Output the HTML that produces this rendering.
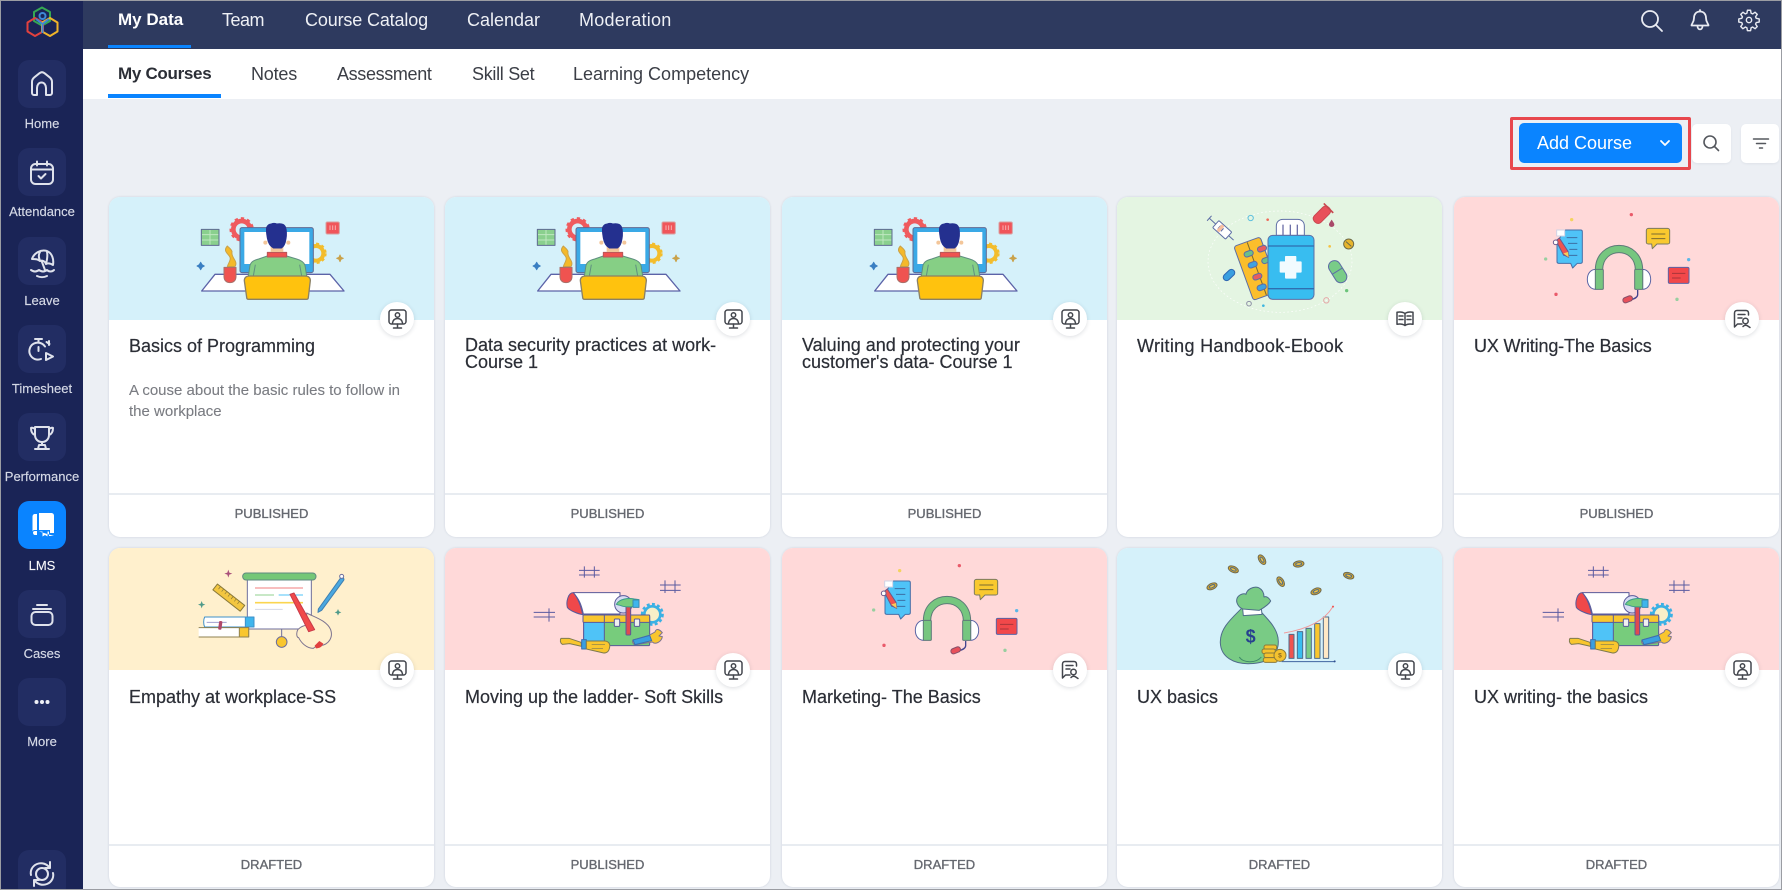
<!DOCTYPE html>
<html lang="en">
<head>
<meta charset="utf-8">
<title>My Courses</title>
<style>
html,body{margin:0;padding:0;background:#eceff4}
body{width:1782px;height:890px;overflow:hidden;position:relative;font-family:"Liberation Sans",sans-serif}
#page{position:absolute;left:0;top:0;width:1782px;height:890px;overflow:hidden;background:#eceff4;filter:blur(.35px)}
.a{position:absolute;white-space:nowrap}
#frame{position:absolute;left:0;top:0;width:1780px;height:888px;border:1px solid #9b9da3;z-index:9;pointer-events:none}
#side{position:absolute;left:1px;top:1px;width:82px;height:888px;background:#1a2456}
#top{position:absolute;left:83px;top:1px;width:1699px;height:48px;background:#2e3a5f}
#sub{position:absolute;left:83px;top:49px;width:1699px;height:50px;background:#fff}
.t{color:#eef0f5;font-size:18px;line-height:20px;top:10px}
.s{color:#3b3e46;font-size:18px;line-height:20px;top:64px}
.box{position:absolute;left:18px;width:48px;height:48px;border-radius:11px;background:#222d63}
.lab{position:absolute;left:1px;width:82px;text-align:center;color:#d5d9e6;font-size:13px;line-height:16px;-webkit-text-stroke:.15px #d5d9e6}
.ic{position:absolute;left:0;top:0;fill:none;stroke:#dfe2ec;stroke-width:2;stroke-linecap:round;stroke-linejoin:round}
.card{position:absolute;width:325px;background:#fff;border-radius:11px;box-shadow:0 0 2px rgba(90,110,140,.22);overflow:hidden}
.r1{top:197px;height:340px}
.r2{top:548px;height:339px}
.img{position:absolute;left:0;top:0;width:325px;height:123px;overflow:hidden}
.r2 .img{height:122px}
.img svg{position:absolute}
.blue{background:#d5f1fa}.green{background:#e4f5e2}.pink{background:#ffd9d9}.yel{background:#fff0cd}
.ti{position:absolute;left:20px;top:140px;font-size:18px;line-height:18px;color:#2b2e36;white-space:nowrap;-webkit-text-stroke:.2px #2b2e36}
.de{position:absolute;left:20px;top:183px;font-size:15px;line-height:21px;color:#7a7c82;white-space:nowrap;-webkit-text-stroke:.1px #7a7c82}
.ln{position:absolute;left:0;top:296px;width:325px;height:2px;background:#e8ecf1}
.st{position:absolute;left:0;top:309px;width:325px;text-align:center;font-size:13px;line-height:16px;color:#666970;-webkit-text-stroke:.35px #666970}
.bd{position:absolute;left:271px;top:105px;width:34px;height:34px;border-radius:50%;background:#fff;box-shadow:0 1px 4px rgba(60,70,90,.18)}
.bd svg{position:absolute;left:0;top:0;fill:none;stroke:#43464d;stroke-width:1.5;stroke-linecap:round;stroke-linejoin:round}
</style>
</head>
<body>
<svg width="0" height="0" style="position:absolute">
<defs>
<g id="prog" stroke="#5f6a92" stroke-width="3" stroke-linejoin="round">
  <rect x="274" y="118" width="53" height="48" fill="#8ad08e"/>
  <path d="M276 134H325M276 150H325M300 120V164" stroke="#bfe8c0" fill="none"/>
  <circle cx="395" cy="118" r="25" fill="none" stroke="#ef5b5e" stroke-width="14"/>
  <circle cx="395" cy="118" r="33" fill="none" stroke="#ef5b5e" stroke-width="7" stroke-dasharray="10 9"/>
  <circle cx="618" cy="190" r="22" fill="none" stroke="#f3bd2c" stroke-width="12"/>
  <circle cx="618" cy="190" r="29" fill="none" stroke="#f3bd2c" stroke-width="6" stroke-dasharray="9 8"/>
  <rect x="390" y="113" width="220" height="135" rx="6" fill="#3aa9e6"/>
  <rect x="403" y="126" width="195" height="96" fill="#fff" stroke="none"/>
  <rect x="648" y="96" width="40" height="36" rx="4" fill="#f0555a" stroke="#d9a0a0"/>
  <path d="M660 106v14M668 106v14M676 106v14" stroke="#f8b0b0"/>
  <path d="M690 195l3 7 7 3-7 3-3 7-3-7-7-3 7-3z" fill="#c9a24a" stroke="#c9a24a"/>
  <path d="M272 217l4 7 7 4-7 4-4 7-4-7-7-4 7-4z" fill="#3a7fc2" stroke="#3a7fc2"/>
  <path d="M315 253H660L702 303H275Z" fill="#fff" stroke="#5c63a8" stroke-width="4"/>
  <path d="M352 168c-18 20 14 26 8 42-2 8-6 12-8 20 14 0 24 0 24-2 8-16-14-26-10-42 1-6-8-12-14-18z" fill="#f4b92a" stroke="#c9a24a"/>
  <path d="M342 232h36v28c0 12-8 18-18 18s-18-6-18-18z" fill="#ef5350" stroke="#a8706a"/>
  <path d="M415 258L420 226C424 213 435 210 446 207L472 198H530L560 207C574 211 582 216 585 226L590 258Z" fill="#86cf85" stroke="#5f8f80"/>
  <path d="M430 258l6-34M575 258l-6-34" stroke="#5f8f80" fill="none"/>
  <path d="M472 187h58v14h-58z" fill="#ef5350" stroke="#b9575a"/>
  <path d="M482 186v-16h38v16z" fill="#f3c69a" stroke="none"/>
  <circle cx="466" cy="158" r="6" fill="#f3c69a" stroke="none"/>
  <circle cx="535" cy="158" r="6" fill="#f3c69a" stroke="none"/>
  <path d="M470 112c4-8 8-10 14-10 4-2 10-3 16 0 12-2 22 0 26 8 4 10 4 26 2 36-2 14-6 24-14 28h-24c-10-6-16-18-18-30-2-12-4-22-2-32z" fill="#24308f" stroke="#24308f"/>
  <path d="M403 272c0-10 6-14 16-14h166c10 0 16 4 16 14l-6 50c0 4-2 6-6 6H416c-4 0-6-2-6-6z" fill="#ffc20e" stroke="#8b8166" stroke-width="4"/>
</g>
<g id="pills" stroke="#5d6da5" stroke-width="3" stroke-linejoin="round">
  <ellipse cx="510" cy="215" rx="216" ry="152" fill="none" stroke="#fff" stroke-width="2" stroke-dasharray="5 7"/>
  <g transform="rotate(-20 440 235)">
    <rect x="398" y="150" width="84" height="172" rx="8" fill="#fbbe2c"/>
    <path d="M440 152v168" stroke="#7a6a30"/>
  </g>
  <rect x="402" y="183" width="28" height="16" rx="8" fill="#6bc08a" transform="rotate(-20 416 191)"/>
  <rect x="442" y="168" width="28" height="16" rx="8" fill="#e85c60" transform="rotate(-20 456 176)"/>
  <rect x="414" y="216" width="28" height="16" rx="8" fill="#3fa2e0" transform="rotate(-20 428 224)"/>
  <rect x="455" y="203" width="26" height="16" rx="8" fill="#6bc08a" transform="rotate(-20 468 211)"/>
  <rect x="428" y="252" width="28" height="16" rx="8" fill="#e85c60" transform="rotate(-20 442 260)"/>
  <rect x="441" y="284" width="28" height="16" rx="8" fill="#3fa2e0" transform="rotate(-20 455 292)"/>
  <path d="M499 136v-28c0-12 8-20 20-20h44c12 0 20 8 20 20v28z" fill="#fff"/>
  <path d="M519 104v32M541 104v32M562 104v32" stroke="#6d70a8" stroke-width="4"/>
  <rect x="474" y="136" width="138" height="192" rx="14" fill="#38bdf0"/>
  <path d="M474 168H612M474 296H612" stroke="#2f6eb0" stroke-width="4"/>
  <path d="M528 198h28c2 0 3 1 3 3v13h13c2 0 3 1 3 3v28c0 2-1 3-3 3h-13v15c0 2-1 3-3 3h-28c-2 0-3-1-3-3v-15h-13c-2 0-3-1-3-3v-28c0-2 1-3 3-3h13v-13c0-2 1-3 3-3z" fill="#f1fbff" stroke="none"/>
  <g transform="rotate(42 330 115)"><rect x="312" y="100" width="52" height="28" rx="3" fill="#fff"/><path d="M364 114h20M286 114h26M286 104v20M326 108v12M338 108v12" fill="none"/><rect x="326" y="102" width="10" height="24" fill="#f9c0a0" stroke="none"/></g>
  <g transform="rotate(45 635 75)"><rect x="621" y="44" width="28" height="60" rx="12" fill="#e8505a" stroke="#c84850"/><path d="M615 46h40" stroke="#c84850" stroke-width="5"/></g>
  <path d="M665 89c-5 8-8 11-8 15 0 4 4 7 8 7s8-3 8-7c0-4-3-7-8-15z" fill="#a84a6a" stroke="none"/>
  <circle cx="716" cy="162" r="15" fill="#e7b52d" stroke="#6c6a4a"/><path d="M708 155l16 14" stroke="#6c6a4a"/>
  <g transform="rotate(-32 683 245)"><rect x="665" y="209" width="36" height="72" rx="18" fill="#79cc88"/><path d="M665 243h36" /></g>
  <g transform="rotate(47 357 255)"><rect x="347" y="235" width="20" height="40" rx="10" fill="#3a9fe0" stroke="#2f66b0"/></g>
  <circle cx="422" cy="84" r="8" fill="none" stroke="#5fc0de"/>
  <circle cx="649" cy="331" r="8" fill="none" stroke="#e5a8a8"/>
  <circle cx="417" cy="341" r="7" fill="none" stroke="#8d8fa6"/>
  <circle cx="473" cy="89" r="4" fill="#ef6a5a" stroke="none"/>
  <circle cx="659" cy="169" r="4" fill="#f5c242" stroke="none"/>
  <circle cx="710" cy="302" r="5" fill="#6cc47b" stroke="none"/>
  <circle cx="460" cy="347" r="4" fill="#3db6e0" stroke="none"/>
</g>
<g id="head" stroke="#5a64a5" stroke-width="3" stroke-linejoin="round">
  <path d="M346 120h46c3 0 5 2 5 5v90c0 3-2 5-5 5h-10l-14 14-6-14h-36c-3 0-5-2-5-5v-60z" fill="#4fc3f7" stroke="#456fa8"/>
  <path d="M320 120h24v18h-24z" fill="#fff" stroke="#cfd3e6"/>
  <path d="M350 143h32M354 160h28M358 178h24M340 196h42" stroke="#3c6fa4" fill="none"/>
  <path d="M318 152l10-8 26 40 2 18-16-8z" fill="#ef5350" stroke="#6c5a8c"/>
  <path d="M340 190l16 12-2-16z" fill="#f7cd5a" stroke="none"/>
  <circle cx="317" cy="157" r="7" fill="#fff" stroke="#6c5a8c"/>
  <path d="M595 115h58c3 0 6 3 6 6v36c0 3-3 5-6 5h-32l-14 14-2-14h-10c-3 0-6-2-6-5v-36c0-3 3-6 6-6z" fill="#f9c92f" stroke="#7a7a60"/>
  <path d="M604 132h42M604 146h42" stroke="#7a6a30" fill="none"/>
  <rect x="655" y="232" width="62" height="48" rx="4" fill="#f2484a" stroke="#5a64a5"/>
  <path d="M666 250h40M666 264h26" stroke="#a8353a" fill="none"/>
  <path d="M412 268c0-17 10-30 25-30v60c-15 0-25-13-25-30z" fill="#fff"/>
  <path d="M602 268c0-17-10-30-24-30v60c14 0 24-13 24-30z" fill="#fff"/>
  <path d="M447 240c0-84 120-84 120 0" fill="none" stroke="#5d7a78" stroke-width="25"/>
  <path d="M447 240c0-84 120-84 120 0" fill="none" stroke="#76c67f" stroke-width="19"/>
  <rect x="436" y="238" width="24" height="60" rx="3" fill="#76c67f" stroke="#5d7a78"/>
  <rect x="554" y="238" width="24" height="60" rx="3" fill="#76c67f" stroke="#5d7a78"/>
  <path d="M563 300v14c0 8-8 12-22 16" fill="none" stroke="#44458f" stroke-width="4"/>
  <rect x="518" y="320" width="30" height="16" rx="8" fill="#e8505a" stroke="#88506a" transform="rotate(-22 533 328)"/>
  <circle cx="365" cy="89" r="5" fill="#f4d35e" stroke="none"/>
  <circle cx="544" cy="74" r="5" fill="#ea5a6a" stroke="none"/>
  <circle cx="287" cy="207" r="5" fill="#98cfa0" stroke="none"/>
  <circle cx="716" cy="209" r="5" fill="#5cb8e8" stroke="none"/>
  <circle cx="318" cy="313" r="5" fill="#ea5a6a" stroke="none"/>
  <circle cx="681" cy="328" r="5" fill="#98cfa0" stroke="none"/>
</g>
<g id="pres" stroke="#6d6e9c" stroke-width="3" stroke-linejoin="round">
  <path d="M355 74l3 9 9 3-9 3-3 9-3-9-9-3 9-3z" fill="#a9507a" stroke="none"/>
  <path d="M275 168l3 8 8 3-8 3-3 8-3-8-8-3 8-3z" fill="#4f9a8a" stroke="none"/>
  <path d="M684 192l3 7 7 3-7 3-3 7-3-7-7-3 7-3z" fill="#4f9a8a" stroke="none"/>
  <g transform="rotate(38 355 158)"><rect x="304" y="146" width="104" height="22" fill="#f3c640" stroke="#8a7a3a"/><path d="M316 146v10M328 146v10M340 146v10M352 146v10M364 146v10M376 146v10M388 146v10" stroke="#8a7a3a" stroke-width="2"/></g>
  <path d="M515 250v26" stroke="#6d6e9c"/>
  <circle cx="515" cy="291" r="16" fill="#f9c62e"/>
  <rect x="412" y="100" width="192" height="152" fill="#fff"/>
  <rect x="398" y="84" width="220" height="21" rx="10" fill="#75c777" stroke="#5f8a80"/>
  <path d="M435 129H579" stroke="#f27e7e" fill="none"/>
  <path d="M435 150H492" stroke="#92d18f" fill="none"/><path d="M506 150H579" stroke="#4fc3f7" fill="none"/>
  <path d="M435 173H579" stroke="#fbd54f" stroke-width="5" fill="none"/>
  <path d="M435 193H518" stroke="#d5d8e4" fill="none"/>
  <path d="M284 216h146v30H284c-4-8-4-22 0-30z" fill="#fff" stroke="#3f90c9"/>
  <path d="M406 216h26v30h-26z" fill="#3fb5ec" stroke="#3f90c9"/>
  <path d="M290 232h60" stroke="#a0a0d0" fill="none"/>
  <path d="M266 248h150v28H266" fill="#fff" stroke="#8f8150"/>
  <path d="M388 248h28v28h-28z" fill="#f9c62e" stroke="#8f8150"/>
  <rect x="326" y="228" width="10" height="26" rx="3" fill="#b0486a" stroke="none" transform="rotate(8 330 240)"/>
  <path d="M625 192l66-92c4-6 14 0 10 6l-66 90-11 6z" fill="#4aa8e0" stroke="#3f7fb0"/>
  <circle cx="695" cy="94" r="6" fill="#fff"/>
  <path d="M590 204c22 12 60 22 72 50 8 24-6 44-30 48l-4-6-18 14c-20 0-36-16-44-32-8 0-8-22 2-28 6-6 14-8 22-10z" fill="#fff0cd" stroke="#7d7490"/>
  <path d="M540 148l12-4 62 110-18 6z" fill="#f04a4a" stroke="#c83a4a"/>
  <path d="M618 310c10 0 18-4 22-14l-12-8-14 14z" fill="#e0403f" stroke="none"/>
</g>
<g id="tool" stroke="#5a5a9a" stroke-width="3" stroke-linejoin="round">
  <path d="M402 76h62M402 90h62M418 64v34M448 64v34M645 120h62M645 136h62M660 106v38M690 106v38M266 202h64M266 216h64M312 190v40" fill="none" stroke="#5a5aa0"/>
  <path d="M385 143h140v64H415c-6-30-14-46-30-64z" fill="#fff"/>
  <path d="M385 143c-16 0-22 28-18 44 6 10 34 20 46 22-6-30-14-50-28-66z" fill="#f0484a"/>
  <circle cx="535" cy="178" r="26" fill="#d8dcf3"/>
  <circle cx="622" cy="208" r="24" fill="#f7efc8" stroke="#3ab0e4" stroke-width="8"/>
  <circle cx="622" cy="208" r="31" fill="none" stroke="#3ab0e4" stroke-width="7" stroke-dasharray="9 7"/>
  <rect x="416" y="212" width="198" height="90" rx="4" fill="#77cc7c"/>
  <rect x="416" y="212" width="62" height="90" fill="#4fc3f7"/>
  <rect x="414" y="210" width="200" height="22" rx="2" fill="#f9c62e"/>
  <path d="M478 210v22" />
  <rect x="508" y="222" width="16" height="22" rx="3" fill="#f0f0f0"/>
  <rect x="568" y="222" width="16" height="22" rx="3" fill="#f0f0f0"/>
  <rect x="543" y="180" width="14" height="90" rx="3" fill="#e04a4f"/>
  <path d="M514 178c8-16 36-20 54-16l14 2v20l-14-2c-4 6-30 4-40 0-6-2-10-2-14-4z" fill="#77cc7c" stroke="#3a9a8a"/>
  <rect x="564" y="165" width="18" height="22" fill="#3fb5ec" stroke="#3a8ab0"/>
  <path d="M564 285l48-14 18-10c4-14 16-6 22 2l-10 10 10 2c-2 14-20 26-30 16l-48 8c-8 2-14-8-10-14z" fill="#f9c62e" stroke="#7d7490"/>
  <path d="M564 285l50-14 6 16-50 12z" fill="#3a9fe0" stroke="#3a6fb0"/>
  <path d="M348 280h24l36 12 2 12-36-8-22 2c-6-4-8-12-4-18z" fill="#f9c62e" stroke="#7d7a50"/>
  <rect x="410" y="284" width="14" height="28" fill="#3a9fe0" stroke="#3a6fb0"/>
  <path d="M424 288h54c12 0 18 8 16 18-2 14-8 18-18 18l-52-12z" fill="#f9c62e" stroke="#7d7a50"/>
  <path d="M440 298h40M440 310h34" stroke="#7d7a50" stroke-width="2"/>
</g>
<g id="coin"><ellipse rx="16" ry="9" fill="#d9a82a" stroke="#6e6a52" stroke-width="3"/><ellipse rx="9" ry="4" fill="#f4c542"/></g>
<g id="money" stroke="#4f6c8a" stroke-width="3" stroke-linejoin="round">
  <use href="#coin" x="306" y="124" transform="rotate(-24 306 124)"/>
  <use href="#coin" x="370" y="73" transform="rotate(24 370 73)"/>
  <use href="#coin" x="456" y="44" transform="rotate(58 456 44)"/>
  <use href="#coin" x="566" y="57" transform="rotate(-8 566 57)"/>
  <use href="#coin" x="512" y="110" transform="rotate(58 512 110)"/>
  <use href="#coin" x="618" y="139" transform="rotate(-22 618 139)"/>
  <use href="#coin" x="716" y="92" transform="rotate(18 716 92)"/>
  <path d="M395 190c-30 30-66 60-64 104 2 42 40 64 90 62 50-2 84-22 84-66 0-40-34-70-62-100z" fill="#79cb85"/>
  <path d="M388 336c10 18 50 20 66 0" fill="none" stroke="#3f8a6a"/>
  <path d="M398 192l56-2 2 18-56 4z" fill="#fff"/>
  <path d="M398 192c-14-6-22-22-16-34 6-10 20-14 26-10 2-14 22-26 38-20 12 6 16 18 16 28 8-4 16 4 20 12-6 12-24 22-34 28z" fill="#79cb85"/>
  <text x="422" y="292" font-family="Liberation Sans,sans-serif" font-size="54" font-weight="bold" text-anchor="middle" fill="#27408f" stroke="none">$</text>
  <rect x="462" y="300" width="38" height="14" rx="6" fill="#f4c22e" stroke="#8a7a3a"/>
  <rect x="456" y="312" width="40" height="14" rx="6" fill="#f4c22e" stroke="#8a7a3a"/>
  <rect x="462" y="324" width="40" height="14" rx="6" fill="#f4c22e" stroke="#8a7a3a"/>
  <rect x="460" y="338" width="42" height="14" rx="6" fill="#f4c22e" stroke="#8a7a3a"/>
  <circle cx="510" cy="331" r="18" fill="#f4c22e" stroke="#8a7a3a"/>
  <text x="510" y="338" font-family="Liberation Sans,sans-serif" font-size="20" font-weight="bold" text-anchor="middle" fill="#8a6a20" stroke="none">$</text>
  <path d="M515 350H675" stroke="#3f64a0"/>
  <circle cx="674" cy="349" r="3" fill="#2f4f90" stroke="none"/>
  <rect x="537" y="268" width="15" height="72" fill="#ef5350"/>
  <rect x="562" y="260" width="16" height="80" fill="#38bdf0"/>
  <rect x="588" y="250" width="16" height="90" fill="#79cb85"/>
  <rect x="614" y="236" width="16" height="104" fill="#f9c62e"/>
  <rect x="640" y="216" width="16" height="124" fill="#ffe8c5"/>
  <path d="M522 264c60-10 118-32 146-78" fill="none" stroke="#f19a9a"/>
  <circle cx="669" cy="185" r="3" fill="#ef5350" stroke="none"/>
</g>
<g id="bm">
  <rect x="9" y="8" width="17" height="14" rx="2.5"/>
  <circle cx="17.5" cy="13" r="2.2"/>
  <path d="M12.5 21c.5-3 2.5-4.500 5-4.500s4.500 1.500 5 4.500"/>
  <path d="M17.500 22v3M13.500 26h8"/>
</g>
<g id="bb">
  <path d="M17 11.500c-2-1.500-5-1.800-8-1.300v12c3-.5 6-.2 8 1.300 2-1.500 5-1.800 8-1.300v-12c-3-.5-6-.2-8 1.300zM17 11.500v12"/>
  <path d="M11 14h4M11 17.500h4M19 14h4M19 17.500h4"/>
</g>
<g id="bc">
  <path d="M17 22h-4.500l-3 3v-14c0-1.500 1-2.500 2.500-2.500h9c1.500 0 2.500 1 2.500 2.500v2"/>
  <path d="M13 12.500h7M13 16h4"/>
  <circle cx="20.500" cy="19" r="2.700"/>
  <path d="M18 24.500c1-1.200 2.500-1.500 4-1l3 2"/>
</g>
</defs>
</svg>

<div id="page">
<div id="side"></div>
<div id="top"></div>
<div id="sub"></div>

<!-- top nav -->
<div class="a t" style="left:118px;font-weight:bold;font-size:17px;color:#fff">My Data</div>
<div class="a t" style="left:222px;letter-spacing:-.5px">Team</div>
<div class="a t" style="left:305px;letter-spacing:-.15px">Course Catalog</div>
<div class="a t" style="left:467px">Calendar</div>
<div class="a t" style="left:579px;letter-spacing:.25px">Moderation</div>
<div class="a" style="left:108px;top:45px;width:83px;height:3px;background:#0a84ff"></div>

<!-- sub nav -->
<div class="a s" style="left:118px;font-weight:bold;font-size:17px;color:#2b2e36;letter-spacing:-.3px">My Courses</div>
<div class="a s" style="left:251px;letter-spacing:-.2px">Notes</div>
<div class="a s" style="left:337px;letter-spacing:-.35px">Assessment</div>
<div class="a s" style="left:472px;letter-spacing:-.3px">Skill Set</div>
<div class="a s" style="left:573px">Learning Competency</div>
<div class="a" style="left:108px;top:94px;width:113px;height:4px;background:#0a84ff"></div>

<!-- top right icons -->
<svg class="a" style="left:1636px;top:5px" width="128" height="30" viewBox="0 0 128 30" fill="none" stroke="#e9ebf2" stroke-width="1.800" stroke-linecap="round" stroke-linejoin="round">
  <circle cx="14" cy="14" r="8"/><path d="M20 20l6 6"/>
  <path d="M64 6.500c-4 0-6 3-6 6.500 0 4.500-2.500 5.500-2.500 7.500h17c0-2-2.500-3-2.500-7.500 0-3.500-2-6.500-6-6.500zM61.500 21c0 4.500 5 4.500 5 0M64 6.500V5"/>
  <g transform="translate(113 15) scale(.78) translate(-113 -15)">
  <circle cx="113" cy="15" r="3.400"/>
  <path d="M111 3h4l.7 3.800 2 .9 3.100-2.200 2.800 2.800-2.200 3.100.9 2 3.800.7v4l-3.800.7-.9 2 2.200 3.100-2.800 2.800-3.100-2.200-2 .9-.7 3.800h-4l-.7-3.800-2-.9-3.100 2.200-2.800-2.800 2.200-3.100-.9-2-3.800-.7v-4l3.800-.7.9-2-2.200-3.100 2.800-2.800 3.100 2.200 2-.9z" transform="translate(0 -.5)"/>
  </g>
</svg>

<!-- toolbar -->
<div class="a" style="left:1510px;top:117px;width:175px;height:47px;border:3px solid #e8474d;border-radius:2px"></div>
<div class="a" style="left:1519px;top:123px;width:163px;height:40px;background:#0a84ff;border-radius:5px"></div>
<div class="a" style="left:1537px;top:133px;font-size:18px;line-height:20px;color:#fff">Add Course</div>
<svg class="a" style="left:1659px;top:138px" width="12" height="10" viewBox="0 0 12 10" fill="none" stroke="#fff" stroke-width="1.800" stroke-linecap="round" stroke-linejoin="round"><path d="M2 3l4 4 4-4"/></svg>
<div class="a" style="left:1692px;top:124px;width:39px;height:39px;background:#fff;border-radius:5px;box-shadow:0 1px 2px rgba(80,90,110,.08)"></div>
<svg class="a" style="left:1701px;top:133px" width="20" height="20" viewBox="0 0 20 20" fill="none" stroke="#55585e" stroke-width="1.600" stroke-linecap="round"><circle cx="9" cy="9" r="6"/><path d="M13.500 13.500l4 4"/></svg>
<div class="a" style="left:1741px;top:124px;width:38px;height:39px;background:#fff;border-radius:5px;box-shadow:0 1px 2px rgba(80,90,110,.08)"></div>
<svg class="a" style="left:1752px;top:134px" width="18" height="18" viewBox="0 0 18 18" fill="none" stroke="#55585e" stroke-width="1.500" stroke-linecap="round"><path d="M1.500 5h15M4.500 9.500h9M7.500 14h3"/></svg>

<!-- sidebar -->
<svg class="a" style="left:24px;top:5px" width="38" height="34" viewBox="0 0 38 34" fill="none" stroke-width="2" stroke-linejoin="round">
  <path d="M18 2.500l8 4.500v9l-8 4.500-8-4.500v-9z" stroke="#35a853"/>
  <path d="M11 13l8 4.500v9l-8 4.500-7.500-4.500v-9z" stroke="#e2413e"/>
  <path d="M26 13l7.500 4.500v9L26 31l-8-4.500v-9z" stroke="#f0b429"/>
  <circle cx="18.500" cy="11" r="3" stroke="#3d89d6"/>
  <path d="M12 14l6.500 5 6.500-5M18.500 19v9" stroke="#3d89d6"/>
</svg>

<div class="box" style="top:60px"></div><div class="lab" style="top:116px">Home</div>
<div class="box" style="top:148px"></div><div class="lab" style="top:204px">Attendance</div>
<div class="box" style="top:237px"></div><div class="lab" style="top:293px">Leave</div>
<div class="box" style="top:325px"></div><div class="lab" style="top:381px">Timesheet</div>
<div class="box" style="top:413px"></div><div class="lab" style="top:469px">Performance</div>
<div class="box" style="top:501px;background:#0a84ff"></div><div class="lab" style="top:558px;color:#fff">LMS</div>
<div class="box" style="top:590px"></div><div class="lab" style="top:646px">Cases</div>
<div class="box" style="top:678px"></div><div class="lab" style="top:734px">More</div>
<div class="box" style="top:850px"></div>

<svg class="ic" width="84" height="890" viewBox="0 0 84 890">
  <path d="M32 93V82c0-2 .8-3.500 2.500-4.800l5-4c1.600-1.300 3.400-1.300 5 0l5 4c1.700 1.300 2.500 2.800 2.500 4.800v11c0 1-.8 2-2 2h-4v-7c0-3-1.800-5.500-4.500-5.500S37 85 37 88v7h-3c-1.200 0-2-1-2-2z"/>
  <rect x="31" y="164" width="22" height="20" rx="4.500"/><path d="M31 169.500h22M37 161.500v4M47 161.500v4"/><path d="M38.500 176l2.500 2.500 4.500-4.500"/>
  <path d="M32 259c2-6 9-10 15-8 5 2 7 8 6 14-3-2-5-2-7-1-1-3-4-4-6-3-2-2-5-2-8-2zM40 252c-2 3-1 6 0 9M47 252c1 4 0 8-1 12M42 262l3 8"/><path d="M31 270c3 2 5 2 8 0 3 2 5 2 8 0 2 2 5 2 7 0M37 276c3 1.500 7 1.500 10 0"/>
  <path d="M45 346.500A8.500 8.500 0 1 0 41 359"/><path d="M35 339h7M38.500 339v3M46.500 342l3 2M49 341v4M38.500 347v4"/><path d="M46 353l7 3.500-7 3.500z"/>
  <path d="M35 427h14v8c0 4-3 7-7 7s-7-3-7-7zM35 429c-2-1.500-4-1.500-4-1 0 3 1 6 4 7M49 429c2-1.500 4-1.500 4-1 0 3-1 6-4 7M42 442v3M35 449h14M38 449l1-4h6l1 4"/>
  <rect x="31.500" y="612" width="21" height="13" rx="4"/><path d="M33 609h18M37 605h10"/>
  <path d="M50 868c-3-4-8-6-13-4-5 2-7 7-6 11M34 880c3 4 8 6 13 4 5-2 7-7 6-11M50 862v6h-5M34 886v-6h5"/><circle cx="42" cy="874" r="6"/>
</svg>
<svg class="a" style="left:30px;top:511px" width="26" height="28" viewBox="0 0 26 28" fill="#fff">
  <path d="M5 3h2v16H5c-2 0-2.500.8-2.500 2V6c0-2 1-3 2.500-3z"/>
  <path d="M9 2h12c2 0 3 1 3 3v17h-4v-3H9z"/>
  <path d="M3 21.500c0-1 .800-1.500 2-1.500h2v4H5c-1.200 0-2-1-2-2.500zM9 20.500h3.500v5L15 24l2.500 1.500v-5H19v4.500h5" />
</svg>
<svg class="a" style="left:34px;top:698px" width="16" height="8" viewBox="0 0 16 8" fill="#eef0f6"><circle cx="2.500" cy="4" r="2"/><circle cx="8" cy="4" r="2"/><circle cx="13.500" cy="4" r="2"/></svg>

<!-- Row 1 -->
<div class="card r1" style="left:109px">
  <div class="img blue"><svg style="left:1px;top:-7px" width="340" height="190" viewBox="0 0 1020 570"><use href="#prog"/></svg></div>
  <div class="bd"><svg width="34" height="34"><use href="#bm"/></svg></div>
  <div class="ti">Basics of Programming</div>
  <div class="de">A couse about the basic rules to follow in<br>the workplace</div>
  <div class="ln"></div><div class="st">PUBLISHED</div>
</div>
<div class="card r1" style="left:445px">
  <div class="img blue"><svg style="left:1px;top:-7px" width="340" height="190" viewBox="0 0 1020 570"><use href="#prog"/></svg></div>
  <div class="bd"><svg width="34" height="34"><use href="#bm"/></svg></div>
  <div class="ti" style="line-height:17px">Data security practices at work-<br>Course 1</div>
  <div class="ln"></div><div class="st">PUBLISHED</div>
</div>
<div class="card r1" style="left:782px">
  <div class="img blue"><svg style="left:1px;top:-7px" width="340" height="190" viewBox="0 0 1020 570"><use href="#prog"/></svg></div>
  <div class="bd"><svg width="34" height="34"><use href="#bm"/></svg></div>
  <div class="ti" style="line-height:17px">Valuing and protecting your<br>customer's data- Course 1</div>
  <div class="ln"></div><div class="st">PUBLISHED</div>
</div>
<div class="card r1" style="left:1117px">
  <div class="img green"><svg style="left:-7px;top:-7px" width="340" height="190" viewBox="0 0 1020 570"><use href="#pills"/></svg></div>
  <div class="bd"><svg width="34" height="34"><use href="#bb"/></svg></div>
  <div class="ti" style="letter-spacing:.3px">Writing Handbook-Ebook</div>
</div>
<div class="card r1" style="left:1454px">
  <div class="img pink"><svg style="left:-4px;top:-7px" width="340" height="190" viewBox="0 0 1020 570"><use href="#head"/></svg></div>
  <div class="bd"><svg width="34" height="34"><use href="#bc"/></svg></div>
  <div class="ti" style="letter-spacing:-.15px">UX Writing-The Basics</div>
  <div class="ln"></div><div class="st">PUBLISHED</div>
</div>

<!-- Row 2 -->
<div class="card r2" style="left:109px">
  <div class="img yel"><svg style="left:1px;top:-3px" width="340" height="190" viewBox="0 0 1020 570"><use href="#pres"/></svg></div>
  <div class="bd"><svg width="34" height="34"><use href="#bm"/></svg></div>
  <div class="ti">Empathy at workplace-SS</div>
  <div class="ln"></div><div class="st">DRAFTED</div>
</div>
<div class="card r2" style="left:445px">
  <div class="img pink"><svg style="left:0;top:-3px" width="340" height="190" viewBox="0 0 1020 570"><use href="#tool"/></svg></div>
  <div class="bd"><svg width="34" height="34"><use href="#bm"/></svg></div>
  <div class="ti">Moving up the ladder- Soft Skills</div>
  <div class="ln"></div><div class="st">PUBLISHED</div>
</div>
<div class="card r2" style="left:782px">
  <div class="img pink"><svg style="left:-4px;top:-7px" width="340" height="190" viewBox="0 0 1020 570"><use href="#head"/></svg></div>
  <div class="bd"><svg width="34" height="34"><use href="#bc"/></svg></div>
  <div class="ti">Marketing- The Basics</div>
  <div class="ln"></div><div class="st">DRAFTED</div>
</div>
<div class="card r2" style="left:1117px">
  <div class="img blue"><svg style="left:-7px;top:-3px" width="340" height="190" viewBox="0 0 1020 570"><use href="#money"/></svg></div>
  <div class="bd"><svg width="34" height="34"><use href="#bm"/></svg></div>
  <div class="ti">UX basics</div>
  <div class="ln"></div><div class="st">DRAFTED</div>
</div>
<div class="card r2" style="left:1454px">
  <div class="img pink"><svg style="left:0;top:-3px" width="340" height="190" viewBox="0 0 1020 570"><use href="#tool"/></svg></div>
  <div class="bd"><svg width="34" height="34"><use href="#bm"/></svg></div>
  <div class="ti">UX writing- the basics</div>
  <div class="ln"></div><div class="st">DRAFTED</div>
</div>

<div id="frame"></div>
</div>
</body>
</html>
